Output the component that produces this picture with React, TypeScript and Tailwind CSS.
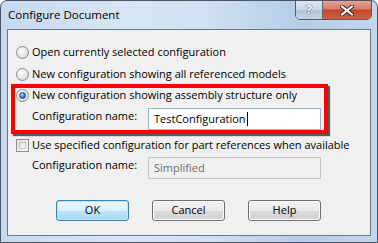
import React from "react";

const font = { fontFamily: '"Open Sans", "Noto Sans", sans-serif' };

function Radio({ checked }: { checked?: boolean }) {
  return (
    <div className="w-[13px] h-[13px] rounded-full border border-[#8a8a8a] bg-[radial-gradient(circle_at_35%_35%,#ffffff,#e2e2e2_60%,#c9c9c9)] flex items-center justify-center shrink-0">
      {checked && (
        <div className="w-[7px] h-[7px] rounded-full bg-[radial-gradient(circle_at_40%_35%,#b9e0ff,#2f7dc4_55%,#1a4f86)] border border-[#1b4a7a]" />
      )}
    </div>
  );
}

function Check() {
  return (
    <div className="w-[13px] h-[13px] border border-[#8e8f8f] bg-[linear-gradient(135deg,#dcdcdc,#f7f7f7)] p-[2px] shrink-0">
      <div className="w-full h-full border border-[#c6c6c6] bg-[linear-gradient(135deg,#e0e0e0,#fafafa)]" />
    </div>
  );
}

function Btn({ label, def }: { label: string; def?: boolean }) {
  return (
    <div
      className={
        "w-[73px] h-[21px] rounded-[3px] border flex items-center justify-center text-[11px] text-black " +
        (def
          ? "border-[#3c7fb1] bg-[linear-gradient(#eaf6fd_0%,#d9f0fc_50%,#bee6fd_51%,#a7d9f5_100%)] shadow-[inset_0_0_0_1px_#bfe5f8]"
          : "border-[#707070] bg-[linear-gradient(#f2f2f2_0%,#ebebeb_50%,#dddddd_51%,#cfcfcf_100%)] shadow-[inset_0_0_0_1px_#fcfcfc]")
      }
    >
      {label}
    </div>
  );
}

export default function App() {
  return (
    <div
      style={font}
      className="relative w-[378px] h-[243px] overflow-hidden rounded-t-[7px] border border-[#4b5563] bg-[linear-gradient(90deg,#c6daee_0%,#d7e6f4_35%,#cfe0f1_55%,#b5cde7_80%,#c2d6ec_100%)] flex flex-col"
    >
      {/* title bar */}
      <div className="h-[28px] flex items-start justify-between shrink-0">
        <div className="pl-[7px] pt-[5px] text-[11.5px] leading-[18px] text-black">Configure Document</div>
        <div className="flex mr-[5px] mt-[-1px] h-[20px] rounded-b-[5px] border border-[#4d5a69] overflow-hidden shadow-[0_0_1px_#ffffff]">
          <div className="w-[27px] h-full flex items-center justify-center bg-[linear-gradient(#dde6ef_0%,#c9d6e3_50%,#b3c4d6_51%,#c3d3e4_100%)] border-r border-[#5c6a79] text-[13px] font-bold text-white [text-shadow:0_0_1px_#36414d,0_0_1px_#36414d]">
            ?
          </div>
          <div className="w-[48px] h-full flex items-center justify-center bg-[linear-gradient(#e8a493_0%,#d77a66_45%,#c2462c_50%,#d45f3f_100%)]">
            <svg width="14" height="11" viewBox="0 0 14 11">
              <path d="M2 1.5 L12 9.5 M12 1.5 L2 9.5" stroke="#3a2420" strokeWidth="4" strokeLinecap="square" />
              <path d="M2 1.5 L12 9.5 M12 1.5 L2 9.5" stroke="#ffffff" strokeWidth="2" strokeLinecap="square" />
            </svg>
          </div>
        </div>
      </div>

      {/* client area */}
      <div className="ml-[6px] w-[364px] h-[207px] border border-[#6b7a8b] bg-[#f0f0f0] flex flex-col text-[11px] text-black shrink-0">
        <div className="pt-[14px] pl-[8px] flex flex-col">
          <div className="h-[16px] flex items-center gap-[3px]">
            <Radio />
            <span className="leading-[16px]">Open currently selected configuration</span>
          </div>
          <div className="h-[16px] mt-[6px] flex items-center gap-[3px]">
            <Radio />
            <span className="leading-[16px]">New configuration showing all referenced models</span>
          </div>
          <div className="h-[16px] mt-[5px] flex items-center gap-[3px]">
            <Radio checked />
            <span className="leading-[16px]">New configuration showing assembly structure only</span>
          </div>
          <div className="h-[22px] mt-[5px] flex items-start pl-[16px]">
            <span className="w-[116px] leading-[16px]">Configuration name:</span>
            <div className="w-[173px] h-[22px] border border-[#8fb6d9] bg-white flex items-center pl-[5px]">
              <span className="leading-[16px]">TestConfiguration</span>
              <span className="w-[1px] h-[14px] bg-black ml-[1px]" />
            </div>
          </div>
          <div className="h-[16px] mt-[7px] flex items-center gap-[3px]">
            <Check />
            <span className="leading-[16px]">Use specified configuration for part references when available</span>
          </div>
          <div className="h-[22px] mt-[4px] flex items-start pl-[16px]">
            <span className="w-[116px] leading-[16px]">Configuration name:</span>
            <div className="w-[173px] h-[22px] border border-[#c2c5ca] bg-[#f0f0f0] flex items-center pl-[5px]">
              <span className="leading-[16px] text-[#6d6d6d]">Simplified</span>
            </div>
          </div>
        </div>
        <div className="mt-[21px] pl-[48px] flex gap-[23px]">
          <Btn label="OK" def />
          <Btn label="Cancel" />
          <Btn label="Help" />
        </div>
      </div>

      {/* red annotation box */}
      <div className="absolute left-[10px] top-[83px] w-[317px] h-[50px] border-[4px] border-[#ff0000] shadow-[2px_2px_1px_rgba(40,40,40,0.75)] pointer-events-none" />
    </div>
  );
}
